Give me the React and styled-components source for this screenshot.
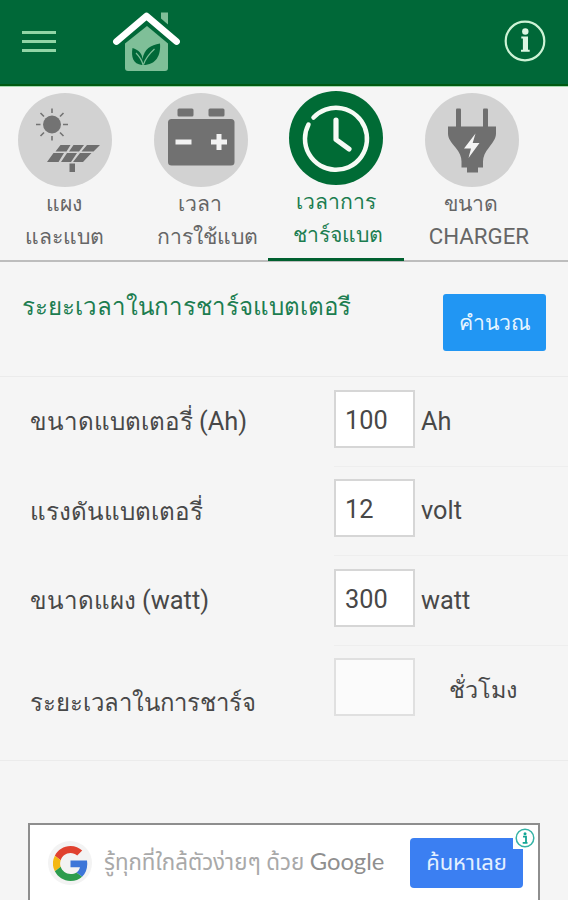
import React from 'react';
import styled, { createGlobalStyle } from 'styled-components';

const GlobalStyle = createGlobalStyle`
  * {
    box-sizing: border-box;
  }
  body {
    margin: 0;
    background: #f5f5f5;
    color: #484848;
    font-family: Roboto, sans-serif;
  }
`;

const tabs = [
  { id: 'panel', first: 'แผง', second: 'และแบต', icon: <PanelIcon /> },
  { id: 'usage', first: 'เวลา', second: 'การใช้แบต', icon: <BatteryIcon />, indent: 15 },
  { id: 'charge', first: 'เวลาการ', second: 'ชาร์จแบต', icon: <ClockIcon />, indent: 4, active: true },
  { id: 'charger', first: 'ขนาด', second: <Latin>CHARGER</Latin>, icon: <PlugIcon />, indent: 15 }
];

const rows = [
  { label: 'ขนาดแบตเตอรี่', note: '(Ah)', value: '100', unit: 'Ah' },
  { label: 'แรงดันแบตเตอรี่', value: '12', unit: 'volt' },
  { label: 'ขนาดแผง', note: '(watt)', value: '300', unit: 'watt' }
];

const App = () => {
  return (
    <Screen>
      <GlobalStyle />
      <Header>
        <MenuButton>
          <MenuBar />
          <MenuBar />
          <MenuBar />
        </MenuButton>
        <HomeLogo />
        <InfoIcon />
      </Header>
      <TabBar>
        {tabs.map(tab => (
          <Tab key={tab.id} $active={tab.active}>
            <TabCircle $active={tab.active}>{tab.icon}</TabCircle>
            <TabLabel>{tab.first}</TabLabel>
            <TabLabel $indent={tab.indent}>{tab.second}</TabLabel>
          </Tab>
        ))}
      </TabBar>
      <TitleRow>
        <Title>ระยะเวลาในการชาร์จแบตเตอรี</Title>
        <CalcButton>คำนวณ</CalcButton>
      </TitleRow>
      <Form>
        {rows.map(row => (
          <Row key={row.unit}>
            <RowLabel>
              {row.label} {row.note && <Latin>{row.note}</Latin>}
            </RowLabel>
            <Field>
              <ValueBox>{row.value}</ValueBox>
              <Unit>{row.unit}</Unit>
            </Field>
          </Row>
        ))}
        <ResultRow>
          <ResultLabel>ระยะเวลาในการชาร์จ</ResultLabel>
          <ResultBox />
          <ResultUnit>ชั่วโมง</ResultUnit>
        </ResultRow>
      </Form>
      <Ad>
        <GoogleBadge>
          <GoogleLogo />
        </GoogleBadge>
        <AdText>
          รู้ทุกที่ใกล้ตัวง่ายๆ ด้วย <AdBrand>Google</AdBrand>
        </AdText>
        <AdButton>ค้นหาเลย</AdButton>
        <AdChoice>
          <svg width="20" height="20" viewBox="0 0 20 20">
            <circle cx="10" cy="10" r="8.8" fill="#fff" stroke="#35b3a6" strokeWidth="1.5" />
            <circle cx="10" cy="5.7" r="1.5" fill="#12a595" />
            <path d="M8 8.6h3v6M7.7 14.9h4.8" fill="none" stroke="#12a595" strokeWidth="1.8" />
          </svg>
        </AdChoice>
      </Ad>
    </Screen>
  );
};

// the Thai glyphs run wide, so latin words are set slightly larger
function Latin({ children }) {
  return <LatinText>{children}</LatinText>;
}

function HomeLogo() {
  return (
    <LogoSvg width="70" height="62" viewBox="112 10 70 62">
      <path d="M161 12.5h7v12l-7-6z" fill="#7fbf98" />
      <path d="M147 26l21 17.5V68a3 3 0 0 1-3 3h-37a3 3 0 0 1-3-3V43.5z" fill="#7fbf98" />
      <path d="M116.5 41.5L146.5 16l30 25.5" fill="none" stroke="#006838" strokeWidth="12" />
      <path d="M116.5 41.5L146.5 16l30 25.5" fill="none" stroke="#fff" strokeWidth="6.8" strokeLinecap="round" strokeLinejoin="round" />
      <path d="M142 65c-9-1-11-8-9.5-17 6 2 9.5 5 10 11 2-10 8-14 17.5-15.5 1 12-4 22-18 21.5z" fill="#006838" />
      <path d="M143.5 64.5c2-6 6-11 11-15.5M143 65c-1-5-4-9-7-12" fill="none" stroke="#7fbf98" strokeWidth="1.2" />
    </LogoSvg>
  );
}

function InfoIcon() {
  return (
    <svg width="42" height="42" viewBox="0 0 42 42">
      <circle cx="21" cy="21" r="19.3" fill="none" stroke="#cdf3d6" strokeWidth="2.2" />
      <circle cx="21.3" cy="11.5" r="3.2" fill="#dcf7e2" />
      <path d="M17.3 16.5h6.7v13.2h1.7v2H17v-2h1.9V18.5h-1.6z" fill="#dcf7e2" />
    </svg>
  );
}

function PanelIcon() {
  return (
    <svg width="94" height="94" viewBox="0 0 94 94">
      <circle cx="34" cy="31.5" r="9" fill="#737373" />
      <path
        d="M34 15.5v4.5M34 43v4.5M18 31.5h4.5M45 31.5h5M22.5 20l3.5 3.5M45.5 20l-3.5 3.5M22.5 43l3.5-3.5M45.5 43l-3.5-3.5"
        stroke="#737373"
        strokeWidth="1.6"
      />
      <g fill="#6e6e6e">
        <path d="M42.5 52h10l-4 6.5h-11zM55.5 52h10.5l-5 6.5H51zM69 52h13l-6.5 6.5H63.5z" />
        <path d="M35.5 60h10.5l-5.5 9H29zM49 60h10l-6 9H43zM62 60h11.5l-8.5 9H55z" />
        <path d="M51.5 70.5h5.5V79h-5.5z" />
      </g>
    </svg>
  );
}

function BatteryIcon() {
  return (
    <svg width="94" height="94" viewBox="0 0 94 94">
      <g fill="#717171">
        <rect x="23.5" y="15.5" width="16" height="8" rx="1.5" />
        <rect x="54.5" y="15.5" width="16" height="8" rx="1.5" />
        <rect x="14" y="26" width="66.5" height="46.5" rx="3.5" />
      </g>
      <path d="M21.5 49h16M57 49h16M65 41v16" fill="none" stroke="#f2f2f2" strokeWidth="5" />
    </svg>
  );
}

function ClockIcon() {
  return (
    <svg width="94" height="94" viewBox="0 0 94 94">
      <path d="M24.5 26.5A31 31 0 1 1 19.5 33.5" fill="none" stroke="#f6fbf5" strokeWidth="4.5" strokeLinecap="round" />
      <path d="M47 29v19.5l13 9.5" fill="none" stroke="#f6fbf5" strokeWidth="5.2" strokeLinecap="round" strokeLinejoin="round" />
    </svg>
  );
}

function PlugIcon() {
  return (
    <svg width="94" height="94" viewBox="0 0 94 94">
      <g fill="#6f6f6f">
        <rect x="31" y="15.5" width="5" height="20" rx="1" />
        <rect x="58" y="15.5" width="5" height="20" rx="1" />
        <path d="M23 33.5H71v7c0 5-3 8.5-7 14-4 5-6 9-6 14v6h-5V79.5H42v-5h-5.5V68.5c0-5-2-9-6-14-4.5-5.5-7.5-9-7.5-14z" />
      </g>
      <path d="M50.5 40.5L39 55.5h7L43.5 65 54.5 50h-6.8z" fill="#f4f4f4" />
    </svg>
  );
}

function GoogleLogo() {
  return (
    <svg width="35" height="35" viewBox="0 0 48 48">
      <path fill="#e0412f" d="M24 9.5c3.54 0 6.71 1.22 9.21 3.6l6.85-6.85C35.9 2.38 30.47 0 24 0 14.62 0 6.51 5.38 2.56 13.22l7.98 6.19C12.43 13.72 17.74 9.5 24 9.5z" />
      <path fill="#3d76d8" d="M46.98 24.55c0-1.57-.15-3.09-.38-4.55H24v9.02h12.94c-.58 2.96-2.26 5.48-4.78 7.18l7.73 6c4.51-4.18 7.09-10.36 7.09-17.65z" />
      <path fill="#f4b813" d="M10.53 28.59a14.5 14.5 0 0 1 0-9.18l-7.98-6.19a24 24 0 0 0 0 21.56z" />
      <path fill="#2c9c4d" d="M24 48c6.48 0 11.93-2.13 15.89-5.81l-7.73-6c-2.15 1.45-4.92 2.3-8.16 2.3-6.26 0-11.57-4.22-13.47-9.91l-7.98 6.19C6.51 42.62 14.62 48 24 48z" />
    </svg>
  );
}

const Screen = styled.div`
  display: flex;
  flex-direction: column;
  width: 568px;
  height: 900px;
  overflow: hidden;
  background: #f5f5f5;
`;

const LatinText = styled.span`
  font-size: 1.05em;
`;

const Header = styled.header`
  display: flex;
  align-items: center;
  flex: none;
  height: 86px;
  padding: 0 22px 2px;
  background: #006838;
  border-bottom: 2px solid #005a12;
`;

const MenuButton = styled.div`
  display: flex;
  flex-direction: column;
  gap: 6px;
  margin-right: 56px;
`;

const MenuBar = styled.span`
  width: 34px;
  height: 3px;
  background: #91d5a6;
`;

const LogoSvg = styled.svg`
  margin-right: auto;
`;

const TabBar = styled.nav`
  display: grid;
  grid-template-columns: repeat(4, 135.7px);
  flex: none;
  height: 176px;
  margin-left: -3.5px;
  border-top: 1px solid #a5dcb0;
  border-bottom: 2px solid #bdbdbd;
`;

const Tab = styled.div`
  display: flex;
  flex-direction: column;
  align-items: center;
  height: 174px;
  padding-top: ${props => (props.$active ? 4 : 6)}px;
  color: ${props => (props.$active ? '#1c7d50' : '#666')};
  border-bottom: 3px solid ${props => (props.$active ? '#00602f' : 'transparent')};
`;

const TabCircle = styled.div`
  flex: none;
  width: 94px;
  height: 94px;
  margin-left: 1px;
  border-radius: 50%;
  background: ${props => (props.$active ? '#006b35' : '#d2d2d2')};
`;

const TabLabel = styled.div`
  height: 33px;
  padding-left: ${props => props.$indent || 0}px;
  font-size: 21.2px;
  line-height: 33px;
  white-space: nowrap;
`;

const TitleRow = styled.div`
  display: flex;
  justify-content: space-between;
  align-items: flex-start;
  flex: none;
  height: 115px;
  padding: 32px 22px 0;
  border-bottom: 1px solid #ebebeb;
`;

const Title = styled.h1`
  margin: 0;
  font-size: 24.1px;
  font-weight: 400;
  line-height: 26px;
  color: #1c7d50;
  white-space: nowrap;
`;

const CalcButton = styled.button`
  width: 103px;
  height: 57px;
  padding: 0;
  border: 0;
  border-radius: 3px;
  background: #2196f3;
  color: #e6f5ff;
  font: inherit;
  font-size: 21.2px;
`;

const Form = styled.div`
  flex: none;
  height: 384px;
  border-bottom: 1px solid #ebebeb;
`;

const Row = styled.div`
  display: grid;
  grid-template-columns: 304px 1fr;
  align-items: center;
  height: 89.5px;
  padding-left: 30px;
`;

const RowLabel = styled.div`
  font-size: 24.2px;
  white-space: nowrap;
`;

const Field = styled.div`
  display: flex;
  align-items: center;
  height: 100%;
  border-bottom: 1px solid #eee;
`;

const ValueBox = styled.div`
  width: 81px;
  height: 58px;
  padding-left: 9px;
  margin-top: -5px;
  border: 2px solid #d6d6d6;
  background: #fff;
  font-size: 25.3px;
  line-height: 57px;
`;

const Unit = styled.div`
  padding-left: 6px;
  font-size: 25.3px;
`;

const ResultRow = styled(Row)`
  grid-template-columns: 304px 81px 1fr;
  align-items: start;
  padding-top: 12px;
`;

const ResultLabel = styled(RowLabel)`
  padding-top: 27px;
  font-size: 23.9px;
  line-height: 36px;
`;

const ResultBox = styled(ValueBox)`
  margin-top: 0;
  background: #fbfbfb;
  border-color: #e0e0e0;
`;

const ResultUnit = styled.div`
  padding: 14px 0 0 34px;
  font-size: 23.4px;
  line-height: 36px;
`;

const Ad = styled.div`
  position: relative;
  display: flex;
  align-items: center;
  flex: none;
  width: 512px;
  height: 90px;
  margin: 62px 0 0 28px;
  padding: 0 15px 10px 18px;
  border: 2px solid #8e8e8e;
  background: #fff;
  font-family: Roboto, 'Noto Sans Thai', sans-serif;
`;

const GoogleBadge = styled.div`
  display: flex;
  align-items: center;
  justify-content: center;
  width: 44px;
  height: 44px;
  border-radius: 50%;
  background: #f3f3f3;
`;

const AdText = styled.div`
  flex: 1;
  padding-left: 12px;
  font-size: 22.3px;
  color: #a9a9a9;
  white-space: nowrap;
`;

const AdBrand = styled.span`
  color: #8f8f8f;
  font-family: Lato, sans-serif;
  font-size: 23.8px;
`;

const AdButton = styled.button`
  flex: none;
  width: 113px;
  height: 50px;
  padding: 0;
  border: 0;
  border-radius: 4px;
  background: #3b7ff2;
  color: #e3f0ff;
  font: inherit;
  font-size: 22px;
`;

const AdChoice = styled.div`
  position: absolute;
  top: 1px;
  right: 1px;
  width: 24px;
  height: 23px;
  padding: 2px;
  background: #fff;
`;

export default App;
